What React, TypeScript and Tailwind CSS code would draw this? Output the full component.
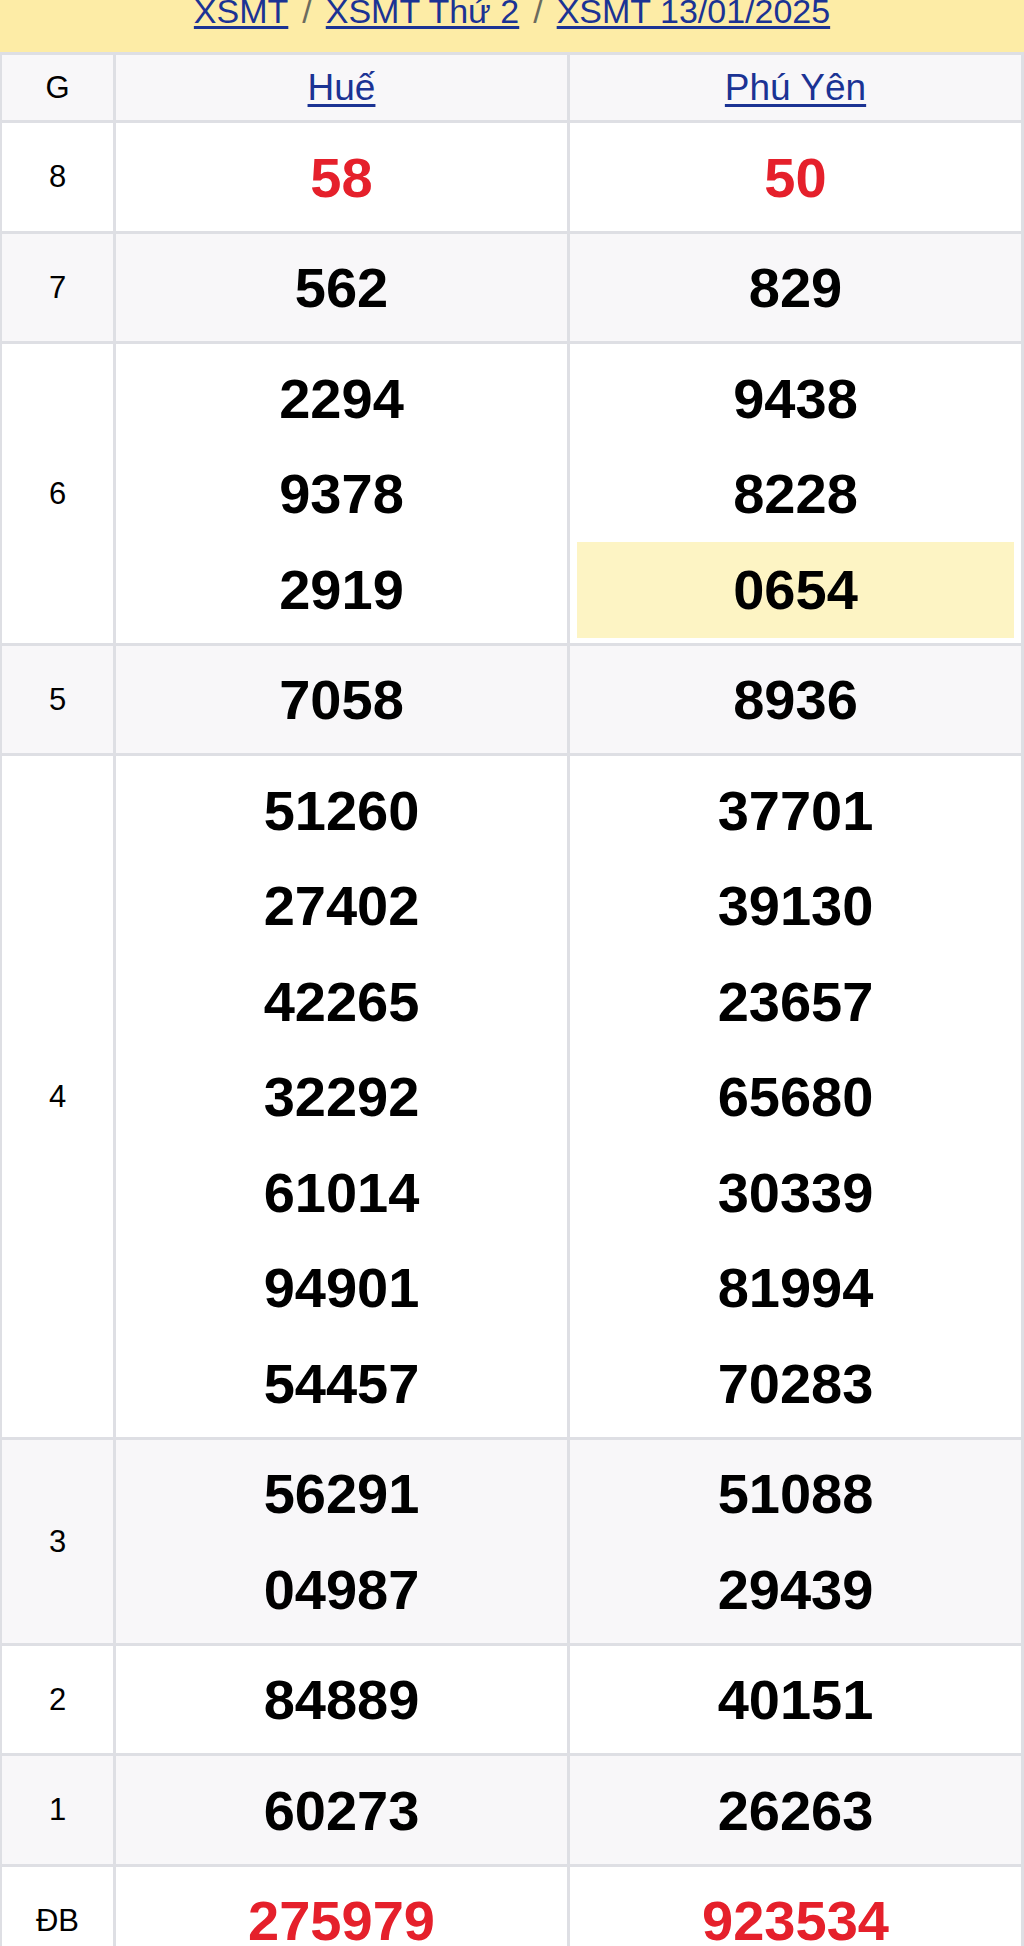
import React from "react";

type Row = {
  label: string;
  hue: string[];
  phuYen: string[];
  red?: boolean;
  highlight?: number;
};

const rows: Row[] = [
  { label: "8", hue: ["58"], phuYen: ["50"], red: true },
  { label: "7", hue: ["562"], phuYen: ["829"] },
  { label: "6", hue: ["2294", "9378", "2919"], phuYen: ["9438", "8228", "0654"], highlight: 2 },
  { label: "5", hue: ["7058"], phuYen: ["8936"] },
  {
    label: "4",
    hue: ["51260", "27402", "42265", "32292", "61014", "94901", "54457"],
    phuYen: ["37701", "39130", "23657", "65680", "30339", "81994", "70283"],
  },
  { label: "3", hue: ["56291", "04987"], phuYen: ["51088", "29439"] },
  { label: "2", hue: ["84889"], phuYen: ["40151"] },
  { label: "1", hue: ["60273"], phuYen: ["26263"] },
  { label: "ĐB", hue: ["275979"], phuYen: ["923534"], red: true },
];

function NumberCell({ nums, red, highlight, bg }: { nums: string[]; red?: boolean; highlight?: number; bg: string }) {
  return (
    <div className={`${bg} flex flex-col px-[7px] pt-[7px] pb-[5px]`}>
      {nums.map((n, i) => (
        <div
          key={i}
          className={`flex h-[95.5px] items-center justify-center text-[56px] font-bold leading-none ${
            red ? "text-[#e5202b]" : "text-black"
          } ${highlight === i ? "bg-[#fdf4c4]" : ""}`}
        >
          {n}
        </div>
      ))}
    </div>
  );
}

export default function App() {
  return (
    <div className="min-h-screen bg-white font-['Liberation_Sans',Arial,sans-serif]">
      {/* Breadcrumb */}
      <div className="flex h-[52px] justify-center overflow-hidden bg-[#fdeca6]">
        <div className="mt-[-6px] flex gap-[14px] text-[34px] leading-[34px] text-[#1b3394]">
          <a href="#" className="underline underline-offset-[3px]">XSMT</a>
          <span className="text-[#6b6b5e]">/</span>
          <a href="#" className="underline underline-offset-[3px]">XSMT Thứ 2</a>
          <span className="text-[#6b6b5e]">/</span>
          <a href="#" className="underline underline-offset-[3px]">XSMT 13/01/2025</a>
        </div>
      </div>

      {/* Result table */}
      <div className="flex flex-col gap-[3px] bg-[#dedfe4] pt-[3px] pl-[2px] pr-[3px]">
        <div className="grid grid-cols-[111px_1fr_1fr] gap-[3px]">
          <div className="flex h-[65px] items-center justify-center bg-[#f8f7f9] text-[31px] leading-none text-black">G</div>
          <div className="flex h-[65px] items-center justify-center bg-[#f8f7f9] text-[37px] leading-none">
            <a href="#" className="text-[#1b3394] underline underline-offset-[4px]">Huế</a>
          </div>
          <div className="flex h-[65px] items-center justify-center bg-[#f8f7f9] text-[37px] leading-none">
            <a href="#" className="text-[#1b3394] underline underline-offset-[4px]">Phú Yên</a>
          </div>
        </div>

        {rows.map((r, idx) => {
          const bg = idx % 2 === 0 ? "bg-white" : "bg-[#f8f7f9]";
          return (
            <div key={r.label} className="grid grid-cols-[111px_1fr_1fr] gap-[3px]">
              <div className={`${bg} flex items-center justify-center text-[31px] leading-none text-black`}>{r.label}</div>
              <NumberCell nums={r.hue} red={r.red} bg={bg} />
              <NumberCell nums={r.phuYen} red={r.red} bg={bg} highlight={r.highlight} />
            </div>
          );
        })}
      </div>
    </div>
  );
}
